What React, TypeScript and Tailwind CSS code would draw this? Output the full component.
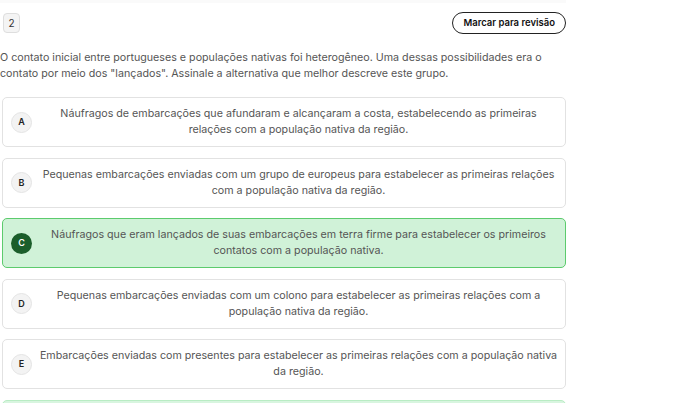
const options = [
  {
    letter: 'A',
    text: 'Náufragos de embarcações que afundaram e alcançaram a costa, estabelecendo as primeiras relações com a população nativa da região.',
  },
  {
    letter: 'B',
    text: 'Pequenas embarcações enviadas com um grupo de europeus para estabelecer as primeiras relações com a população nativa da região.',
  },
  {
    letter: 'C',
    text: 'Náufragos que eram lançados de suas embarcações em terra firme para estabelecer os primeiros contatos com a população nativa.',
    correct: true,
  },
  {
    letter: 'D',
    text: 'Pequenas embarcações enviadas com um colono para estabelecer as primeiras relações com a população nativa da região.',
  },
  {
    letter: 'E',
    text: 'Embarcações enviadas com presentes para estabelecer as primeiras relações com a população nativa da região.',
  },
];

export default function App() {
  return (
    <div className="w-[695px] h-[403px] overflow-hidden bg-white" style={{ fontFamily: 'Inter, "Noto Sans", sans-serif' }}>
      <div className="w-[566px]">
        {/* Top edge of previous block */}
        <div className="h-[3px] bg-[#fafafa]" />

        {/* Header */}
        <div className="flex items-center justify-between pl-[3px] pt-[9px]">
          <div className="w-[17px] h-[20px] flex items-center justify-center rounded-[4px] border border-[#dedede] bg-[#f4f4f4] text-[10px] text-[#333]">
            2
          </div>
          <button className="h-[22px] px-[10px] rounded-full border border-[#222] text-[9.5px] font-semibold text-[#111] leading-none">
            Marcar para revisão
          </button>
        </div>

        {/* Question */}
        <p className="mt-[16px] text-[10.7px] leading-[16px] text-[#555]">
          O contato inicial entre portugueses e populações nativas foi heterogêneo. Uma dessas possibilidades era o contato por meio dos "lançados". Assinale a alternativa que melhor descreve este grupo.
        </p>

        {/* Options */}
        <div className="mt-[15px] flex flex-col gap-[10.5px] pl-[2px]">
          {options.map(o => (
            <div
              key={o.letter}
              className={`h-[50px] flex items-center pl-[8px] pr-[7px] rounded-[5px] border ${
                o.correct ? 'bg-[#d0f2d8] border-[#5ccb6d]' : 'bg-white border-[#e2e2e2]'
              }`}
            >
              <div
                className={`w-[21px] h-[21px] shrink-0 rounded-full flex items-center justify-center text-[9px] font-semibold ${
                  o.correct ? 'bg-[#1b5e2b] text-white' : 'bg-[#f3f3f3] border border-[#e4e4e4] text-[#222]'
                }`}
              >
                {o.letter}
              </div>
              <p className="flex-1 pl-[7px] text-center text-[10.7px] leading-[16px] text-[#555]">{o.text}</p>
            </div>
          ))}
          <div className="h-[50px] rounded-[5px] border border-[#b9ecc4] bg-[#d8f5df]" />
        </div>
      </div>
    </div>
  );
}
